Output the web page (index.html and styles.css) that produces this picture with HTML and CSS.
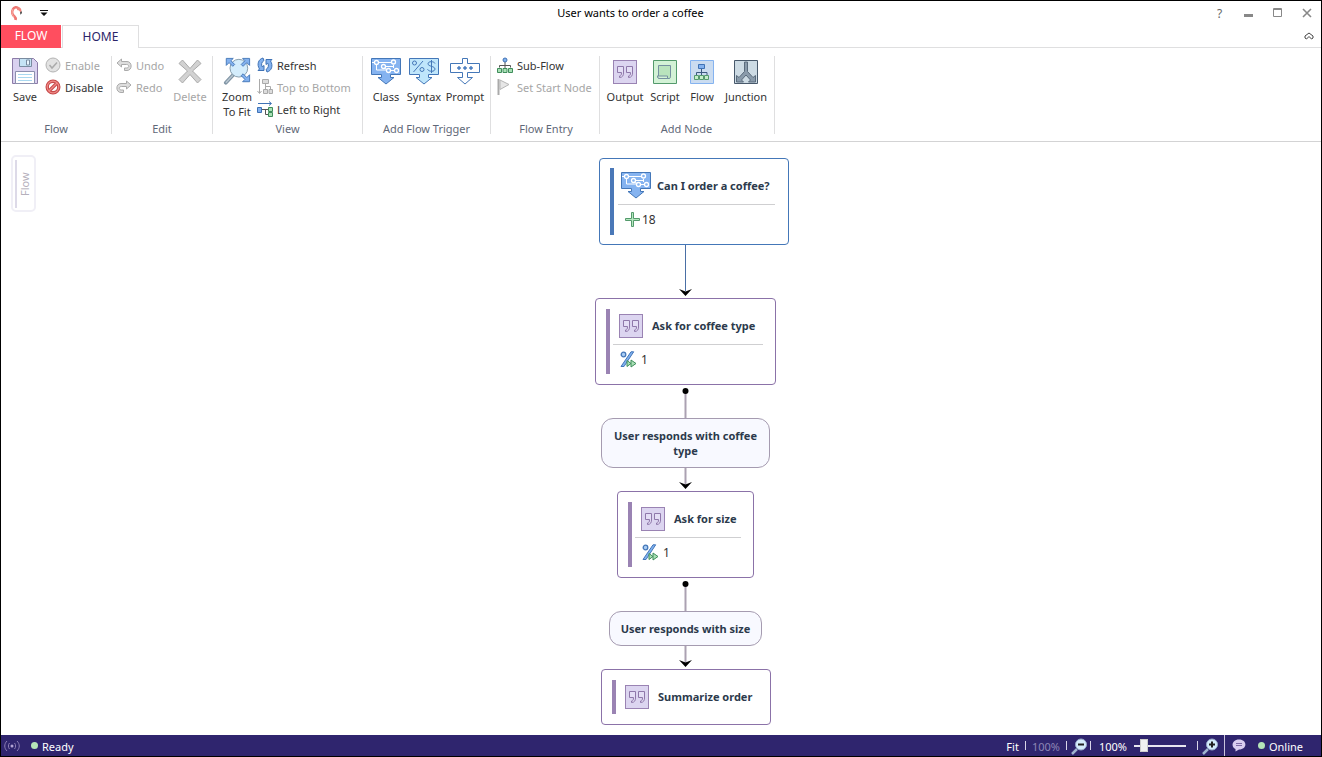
FILE: index.html
```
<!DOCTYPE html>
<html lang="en">
<head>
<meta charset="utf-8">
<title>User wants to order a coffee</title>
<link rel="stylesheet" href="styles.css">
</head>
<body>
<svg class="defs" aria-hidden="true">
  <symbol id="i-quote" viewBox="0 0 24 24">
    <rect x=".5" y=".5" width="23" height="23" fill="#dcd5f0" stroke="#9a83b3"/>
    <path d="M4.500 6.500h6v6.500c0 2.500-1 4.500-4 4.500v-1.500c1.500 0 2-1 2-3.500h-4zM13.500 6.500h6v6.500c0 2.500-1 4.500-4 4.500v-1.500c1.500 0 2-1 2-3.500h-4z" fill="#e4def5" stroke="#8f78aa"/>
  </symbol>
  <symbol id="i-class" viewBox="0 0 30 28">
    <path d="M.5 1.500h29v16H19.500v3h3.500L15 27 7 20.500h3.500v-3H.5z" fill="#85b3f0" stroke="#4477b8"/>
    <path d="M1 5.500h3M8 5.500h12M5.500 7.500v5.500H15M22.500 8v3M14.500 9.500h8.500M12.500 11l4 1.500M19.500 13.500h4" fill="none" stroke="#fff"/>
    <g fill="#85b3f0" stroke="#fff" stroke-width="1.300"><circle cx="5.500" cy="5.500" r="2"/><circle cx="22.500" cy="5" r="2"/><circle cx="12.500" cy="9.500" r="2"/><circle cx="17.500" cy="13.500" r="2"/><circle cx="25.500" cy="13.500" r="2"/></g>
  </symbol>
  <symbol id="i-percent" viewBox="0 0 17 17">
    <circle cx="3.500" cy="3.500" r="2.300" fill="#a9cdf5" stroke="#4477b8" stroke-width="1.300"/>
    <path d="M11 .8h2.700L4 15.500H1z" fill="#7fb0ee" stroke="#4477b8"/>
    <path d="M7 9.500l4 3-4 3zM11 9l5 3.500-5 3.500z" fill="#a9e0b5" stroke="#3f8d5b"/>
  </symbol>
</svg>
<div class="window">
  <header class="titlebar">
    <div class="quick">
      <svg width="14" height="16" viewBox="0 0 14 16"><path d="M8.500 3.500C7 1.500 4 2 2.800 4.500 1.500 7 2.500 10 4.500 11.500c1 .8 1.300 2 1 3.500" fill="none" stroke="#ee7772" stroke-width="2.600"/><path d="M3 4C1.500 6.500 2 10 4 12" fill="none" stroke="#fba9a0"/><path d="M7.500 2c2.500 0 4 1.500 4 4l-1 1.500-1.500-2-2-.5z" fill="#f0857d"/><path d="M11.500 6l.5 2-1.500 1.800-.5-2.300z" fill="#444"/></svg>
      <button class="plain" aria-label="Customize toolbar"><svg width="8" height="6" viewBox="0 0 8 6"><path d="M0 0h8v1H0zM.5 2.500h7L4 6z" fill="#111"/></svg></button>
    </div>
    <h1 class="title">User wants to order a coffee</h1>
    <div class="controls">
      <button class="plain help" aria-label="Help">?</button>
      <button class="plain" aria-label="Minimize"><svg width="10" height="10" viewBox="0 0 10 10"><path d="M0 6h9v3H0z" fill="#888"/></svg></button>
      <button class="plain" aria-label="Maximize"><svg width="10" height="10" viewBox="0 0 10 10"><path d="M.5 .5h8v8h-8zM.5 1.500h8" fill="none" stroke="#888"/></svg></button>
      <button class="plain" aria-label="Close"><svg width="10" height="10" viewBox="0 0 10 10"><path d="M1 1l8 8M9 1L1 9" stroke="#888" stroke-width="1.600"/></svg></button>
    </div>
  </header>
  <nav class="tabs">
    <button class="tab tab-file">FLOW</button>
    <button class="tab tab-home">HOME</button>
    <button class="plain collapse" aria-label="Collapse ribbon"><svg width="10" height="8" viewBox="0 0 10 8"><path d="M1 4l4-3 4 3v2L7.500 7 5 4.500 2.500 7 1 6z" fill="none" stroke="#444"/></svg></button>
  </nav>
  <div class="ribbon">
    <section class="group g-flow">
      <div class="tools">
        <button class="big"><svg width="26" height="28" viewBox="0 0 26 28"><path d="M.5 1.500h21l4 4v21H.5z" fill="#d9d1ef" stroke="#8c7ba8"/><path d="M7.500 1.500h12v8h-12z" fill="#c5e3f5" stroke="#7a8ba0"/><path d="M14.500 3h3v5h-3z" fill="#e8f6ff" stroke="#7a8ba0"/><path d="M3.500 14.500h19v12h-19z" fill="#fff" stroke="#8c8fae"/><path d="M6 17.500h14M6 20.500h14M6 23.500h14" stroke="#a9d8f0"/></svg><span>Save</span></button>
        <div class="stack">
          <button class="small" disabled><svg width="16" height="16" viewBox="0 0 16 16"><circle cx="8" cy="8" r="7" fill="#e2e2e2" stroke="#b3b3b3"/><path d="M4.500 8l2.500 3 5-5.500" fill="none" stroke="#aaa" stroke-width="1.500"/></svg>Enable</button>
          <button class="small"><svg width="16" height="16" viewBox="0 0 16 16"><circle cx="8" cy="8" r="5.800" fill="#fff" stroke="#c64a4a" stroke-width="3.400"/><path d="M4 12l8-8" stroke="#c64a4a" stroke-width="3.400"/><circle cx="8" cy="8" r="5.800" fill="none" stroke="#f08a87" stroke-width="1.200"/><path d="M4 12l8-8" stroke="#f08a87" stroke-width="1.200"/></svg>Disable</button>
        </div>
      </div>
      <h2 class="caption">Flow</h2>
    </section>
    <section class="group g-edit">
      <div class="tools">
        <div class="stack">
          <button class="small" disabled><svg width="16" height="14" viewBox="0 0 16 14"><path d="M5.500 1v2.500H11c5.500 0 5.500 9 0 9H8.500v-2.500h2c3 0 3-3.500 0-3.500h-5V9L1 5z" fill="#ddd" stroke="#aaa"/></svg>Undo</button>
          <button class="small" disabled><svg width="16" height="14" viewBox="0 0 16 14"><path d="M10.500 1v2.500H5c-5.500 0-5.500 9 0 9h2.500v-2.500h-2c-3 0-3-3.500 0-3.500h5V9L15 5z" fill="#ddd" stroke="#aaa"/></svg>Redo</button>
        </div>
        <button class="big" disabled><svg width="26" height="28" viewBox="0 0 26 28"><path d="M2 6.500L5.500 3 13 11.500 20.500 3 24 6.500 15.500 14 24 22.500 20.500 26 13 17.500 5.500 26 2 22.500 10.500 14z" fill="#d2d2d2" stroke="#aaa"/></svg><span>Delete</span></button>
      </div>
      <h2 class="caption">Edit</h2>
    </section>
    <section class="group g-view">
      <div class="tools">
        <button class="big"><svg width="28" height="30" viewBox="0 0 28 30"><path d="M10 19L2 27.500" stroke="#8095a5" stroke-width="4" stroke-linecap="round"/><path d="M9.500 19.500L2 27.500" stroke="#b9c7d1" stroke-width="1.500"/><circle cx="16" cy="12" r="9.500" fill="#d4edfc" stroke="#8098a8"/><g fill="#83b1ee" stroke="#4477b8"><path d="M2.500 1.500H10L7.500 4l4 4-2 2-4-4L2.500 9zM27.500 1.500H20L22.500 4l-4 4 2 2 4-4 3 3zM27.500 26.500H20l2.500-2.500-4-4 2-2 4 4 3-3z"/></g></svg><span>Zoom<br>To Fit</span></button>
        <div class="stack">
          <button class="small"><svg width="16" height="16" viewBox="0 0 16 16"><path d="M6 1C1.500 2 -.5 7.500 2.500 12L1 13.500h6v-5l-1.800 1.300C4 7.500 4.500 5 7 3.500zM10 15c4.500-1 6.500-6.500 3.500-11L15 2.500H9v5l1.800-1.300C12 8.500 11.500 11 9 12.500z" fill="#83b1ee" stroke="#3f72b5"/></svg>Refresh</button>
          <button class="small" disabled><svg width="16" height="16" viewBox="0 0 16 16"><path d="M2.500 0v14M.5 12l2 2.500 2-2.500M8.500 5v5M8.500 7.500h5V10" fill="none" stroke="#aaa"/><path d="M5.500 .5h6v4h-6zM6.500 10.500h4v4h-4zM12 10.500h3.500v4H12z" fill="#ddd" stroke="#aaa"/></svg>Top to Bottom</button>
          <button class="small"><svg width="16" height="16" viewBox="0 0 16 16"><path d="M1 2.500h13M12 .5l2.500 2-2.500 2" fill="none" stroke="#3f72b5"/><path d="M5 8.500h6M8.500 8.500v5H11" fill="none" stroke="#555"/><path d="M.5 6.500h4v5h-4z" fill="#83b1ee" stroke="#3f72b5"/><path d="M11.500 6.500h4v4h-4zM11.500 11.500h4v4h-4z" fill="#a9e0b5" stroke="#3f8d5b"/></svg>Left to Right</button>
        </div>
      </div>
      <h2 class="caption">View</h2>
    </section>
    <section class="group g-trigger">
      <div class="tools">
        <button class="big"><svg width="30" height="28"><use href="#i-class"/></svg><span>Class</span></button>
        <button class="big"><svg width="30" height="28" viewBox="0 0 30 28"><path d="M.5 1.500h29v16H19.500v3h3.500L15 27 7 20.500h3.500v-3H.5z" fill="#bfe6fb" stroke="#4477b8"/><g fill="none" stroke="#4477b8"><circle cx="5.500" cy="6" r="2"/><circle cx="13" cy="12.500" r="2"/><path d="M14 4L4.500 15M26 6.500c-1-2.500-7-2.500-7 .3s7 2.200 7 5.200-6 3-7.500.3M22.500 3v13"/></g></svg><span>Syntax</span></button>
        <button class="big wide"><svg width="30" height="28" viewBox="0 0 30 28"><path d="M12.500 1.500h5v5h12v9h-12v5h5L15 27l-7.500-6.500h5v-5H.5v-9h12z" fill="#fff" stroke="#4477b8"/><g fill="#5f93d8" stroke="#4477b8"><circle cx="9" cy="11" r="1.300"/><circle cx="15" cy="11" r="1.300"/><circle cx="21" cy="11" r="1.300"/></g></svg><span>Prompt</span></button>
      </div>
      <h2 class="caption">Add Flow Trigger</h2>
    </section>
    <section class="group g-entry">
      <div class="tools">
        <div class="stack">
          <button class="small"><svg width="16" height="16" viewBox="0 0 16 16"><path d="M8 5v3M2.500 10.500v-2h11v2M8 8v3" fill="none" stroke="#555"/><circle cx="8" cy="3" r="2" fill="#83b1ee" stroke="#3f72b5"/><path d="M.5 11.500h4v4h-4zM6 11.500h4v4H6zM11.500 11.500h4v4h-4z" fill="#a9e0b5" stroke="#3f8d5b"/></svg>Sub-Flow</button>
          <button class="small" disabled><svg width="16" height="16" viewBox="0 0 16 16"><path d="M1.500 0v16" stroke="#aaa" stroke-width="2"/><path d="M3 1l9 4.500L3 10.500z" fill="#e6e6e6" stroke="#b5b5b5"/></svg>Set Start Node</button>
        </div>
      </div>
      <h2 class="caption">Flow Entry</h2>
    </section>
    <section class="group g-node">
      <div class="tools">
        <button class="big wide"><svg class="tile" width="24" height="24"><use href="#i-quote"/></svg><span>Output</span></button>
        <button class="big script"><svg class="tile" width="24" height="24" viewBox="0 0 24 24"><path d="M.5 .5h23v23H.5z" fill="#d3f2d6" stroke="#549a6c"/><path d="M5.500 5.500h12v10.500c0 1 0 2.500-1.500 2.500H7c-2 0-2.500-1-2.500-2.500h1z" fill="#b9e3bd" stroke="#7590a0"/><path d="M4.500 16h10v2.500H7c-2 0-2.500-1-2.500-2.500z" fill="#d3f2d6" stroke="#7590a0"/></svg><span>Script</span></button>
        <button class="big"><svg class="tile" width="24" height="24" viewBox="0 0 24 24"><path d="M.5 .5h23v23H.5z" fill="#cbdcf0" stroke="#85b3f0"/><path d="M11.500 8v8M6.500 15.500v-3h10.500v3" fill="none" stroke="#3d5a80"/><path d="M8.500 4.500h6v4h-6z" fill="#83b1ee" stroke="#3f72b5"/><path d="M4.500 15.500h4v4h-4zM9.500 15.500h4v4h-4zM14.500 15.500h4v4h-4z" fill="#c5efc9" stroke="#549a6c"/></svg><span>Flow</span></button>
        <button class="big xwide"><svg class="tile" width="24" height="24" viewBox="0 0 24 24"><path d="M.5 .5h23v23H.5z" fill="#cddbe4" stroke="#48596b"/><path d="M10.500 2h3v9.500l5.500 6 2.500-2v6.500h-7l2-2-4.500-5-4.500 5 2 2H2.500v-6.500l2.500 2 5.500-6z" fill="#8a9bab" stroke="#5a6b7c"/></svg><span>Junction</span></button>
      </div>
      <h2 class="caption">Add Node</h2>
    </section>
  </div>
  <main class="canvas">
    <button class="palette"><span>Flow</span></button>
    <div class="diagram">
      <svg class="links" width="220" height="590" viewBox="0 0 220 590">
        <path d="M95.500 103v46" stroke="#4a6fa5"/>
        <path d="M95.500 249v27M95.500 326v18M95.500 442v27M95.500 504v18" stroke="#aba1b2" stroke-width="2"/>
        <circle cx="95.500" cy="249" r="3"/><circle cx="95.500" cy="442" r="3"/>
        <path d="M89 147l6.500 2.500 6.500-2.500-6.500 7zM89 340l6.500 2.500 6.500-2.500-6.500 7zM89 518l6.500 2.500 6.500-2.500-6.500 7z"/>
      </svg>
      <article class="node trigger n1">
        <div class="body">
          <div class="head"><svg width="30" height="28"><use href="#i-class"/></svg><h3>Can I order a coffee?</h3></div>
          <div class="foot"><svg width="16" height="16" viewBox="0 0 16 16"><path d="M6.500 .5h2v6h6v2h-6v6h-2v-6h-6v-2h6z" fill="#b5e8bf" stroke="#549a6c"/></svg><span>18</span></div>
        </div>
      </article>
      <article class="node n2">
        <div class="body">
          <div class="head"><svg width="24" height="24"><use href="#i-quote"/></svg><h3>Ask for coffee type</h3></div>
          <div class="foot"><svg width="17" height="17"><use href="#i-percent"/></svg><span>1</span></div>
        </div>
      </article>
      <div class="pill p1">User responds with coffee type</div>
      <article class="node n3">
        <div class="body">
          <div class="head"><svg width="24" height="24"><use href="#i-quote"/></svg><h3>Ask for size</h3></div>
          <div class="foot"><svg width="17" height="17"><use href="#i-percent"/></svg><span>1</span></div>
        </div>
      </article>
      <div class="pill p2">User responds with size</div>
      <article class="node n4">
        <div class="body">
          <div class="head"><svg width="24" height="24"><use href="#i-quote"/></svg><h3>Summarize order</h3></div>
        </div>
      </article>
    </div>
  </main>
  <footer class="status">
    <svg width="16" height="12" viewBox="0 0 16 12"><g fill="none" stroke="#8d7fb5"><path d="M3 1C0 4 0 8 3 11M5.500 3c-1.500 2-1.500 4 0 6M13 1c3 3 3 7 0 10M10.500 3c1.500 2 1.500 4 0 6"/></g><circle cx="8" cy="6" r="1.500" fill="#b3a5d5"/></svg>
    <span class="dot ready-dot"></span><span>Ready</span>
    <div class="zoom">
      <button class="plain">Fit</button><i class="sep"></i><button class="plain dim" disabled>100%</button><i class="sep"></i>
      <button class="plain" aria-label="Zoom out"><svg width="17" height="17" viewBox="0 0 17 17"><path d="M6 11l-5 5" stroke="#9fb4cf" stroke-width="2.500"/><circle cx="10" cy="6.500" r="5.500" fill="#d4edfc" stroke="#9ac"/><path d="M7 6.500h6" stroke="#222" stroke-width="2"/></svg></button><i class="sep"></i>
      <output class="level">100%</output>
      <input class="slider" type="range" min="0" max="100" value="14" aria-label="Zoom level"><i class="sep"></i>
      <button class="plain" aria-label="Zoom in"><svg width="17" height="17" viewBox="0 0 17 17"><path d="M6 11l-5 5" stroke="#9fb4cf" stroke-width="2.500"/><circle cx="10" cy="6.500" r="5.500" fill="#d4edfc" stroke="#9ac"/><path d="M7 6.500h6M10 3.500v6" stroke="#222" stroke-width="2"/></svg></button>
    </div>
    <div class="online">
      <svg width="14" height="13" viewBox="0 0 14 13"><path d="M7 .5c8.500 0 8.500 10 0 10L3.500 12.500v-2.500C-1.500 8 0 .5 7 .5z" fill="#d9cdf0"/><path d="M4 4.500h6M4 6.500h6" stroke="#7d6aa5"/></svg>
      <span class="dot"></span><span>Online</span>
    </div>
  </footer>
</div>
</body>
</html>
```
FILE: styles.css
```
* { box-sizing: border-box; }
body { margin: 0; font: 11px/15px "Noto Sans", "Open Sans", sans-serif; color: #333; background: #fff; }
h1, h2, h3 { margin: 0; font-size: inherit; font-weight: 400; }
button { font: inherit; color: inherit; background: none; border: 0; padding: 0; margin: 0; }
svg { display: block; flex: none; }
.defs { position: absolute; width: 0; height: 0; }
.window { display: flex; flex-direction: column; height: 100vh; border: 1px solid #000; }
.plain { display: flex; align-items: center; justify-content: center; }

.titlebar { display: flex; height: 24px; flex: none; }
.quick { display: flex; align-items: center; gap: 16px; width: 55px; padding-left: 9px; }
.title { flex: 1; text-align: center; line-height: 24px; color: #000; }
.controls { display: flex; }
.controls .plain { width: 29px; }
.controls .help { font-size: 12px; color: #666; }

.tabs { display: flex; height: 23px; flex: none; border-bottom: 1px solid #dfdfe0; }
.tab { height: 23px; font-size: 12px; padding-bottom: 2px; }
.tab-file { width: 60px; background: #ff4e5f; color: #fff; }
.tab-home { width: 77px; margin-left: 1px; background: #fff; border: 1px solid #dfdfe0; border-bottom: 0; color: #2b2468; }
.collapse { margin-left: auto; width: 25px; }

.ribbon { display: flex; flex: none; padding: 8px 0 7px; border-bottom: 1px solid #d3d3d4; }
.group { display: flex; flex-direction: column; height: 78px; border-right: 1px solid #dfdfe0; }
.g-flow { width: 111px; padding-left: 4px; }
.g-edit { width: 101px; padding-left: 4px; }
.g-view { width: 150px; padding-left: 4px; }
.g-trigger { width: 128px; padding-left: 4px; }
.g-entry { width: 109px; padding-left: 6px; }
.g-node { width: 175px; padding-left: 3px; }
.tools { display: flex; flex: 1; align-items: flex-start; }
.caption { flex: none; margin-right: 4px; padding-top: 1px; height: 14px; text-align: center; color: #5f6878; }
.big { display: flex; flex-direction: column; align-items: center; width: 38px; white-space: nowrap; }
.big svg { height: 28px; margin: 1px 0 4px; }
.big .tile { height: 24px; margin: 4px 0 5px; }
.g-flow .big, .g-edit .big, .g-view .big { width: 40px; }
.big.wide { width: 44px; }
.big.xwide { width: 50px; }
.big.script { width: 36px; }
.stack { display: flex; flex-direction: column; margin-top: -2px; }
.small { display: flex; align-items: center; gap: 4px; height: 22px; white-space: nowrap; }
.g-edit .stack { width: 54px; }
.small:disabled, .big:disabled { color: #a6a6a6; }

.canvas { flex: 1; min-height: 0; position: relative; }
.palette { display: flex; align-items: center; margin: 13px 0 0 10px; width: 25px; height: 57px; padding: 3px 0 3px 2px; border: 2px solid #f0eff6; border-radius: 5px; color: #b5b0bc; }
.palette span { writing-mode: vertical-rl; transform: rotate(180deg); border-right: 2px solid #dddae8; height: 48px; width: 18px; line-height: 15px; text-align: center; }
.diagram { position: absolute; top: 0; left: 50%; margin-left: -71px; }
.links { position: absolute; }
.node { position: absolute; display: flex; border: 1px solid #8b72a8; border-radius: 4px; padding: 10px 12px 10px 10px; background: #fff; }
.node::before { content: ""; width: 4px; background: #9a83b3; margin-right: 3px; }
.trigger { border-color: #4477b8; padding: 9px 13px 9px 10px; }
.trigger::before { background: #4a78b8; margin-right: 4px; }
.body { flex: 1; }
.head { display: flex; align-items: center; gap: 9px; height: 34px; padding: 0 0 2px 6px; white-space: nowrap; }
.head:not(:last-child) { height: 36px; border-bottom: 1px solid #cfcfd1; }
.head:last-child svg { margin-top: 2px; }
.trigger .head:not(:last-child) { gap: 6px; padding-left: 3px; height: 37px; }
.head h3 { font-weight: 700; color: #2c3a4c; }
.foot { display: flex; align-items: center; gap: 4px; height: 29px; padding-left: 7px; }
.trigger .foot { gap: 1px; }
.foot span { font-size: 12px; }
.n1 { left: 9px; top: 16px; width: 190px; height: 87px; }
.n2 { left: 5px; top: 156px; width: 181px; height: 87px; }
.n3 { left: 27px; top: 349px; width: 137px; height: 87px; }
.n4 { left: 11px; top: 527px; width: 170px; height: 56px; }
.pill { position: absolute; display: flex; align-items: center; text-align: center; padding: 0 8px; border: 1px solid #a59bb0; border-radius: 12px; background: #f8f9ff; font-weight: 700; color: #2c3a4c; justify-content: center; }
.p1 { left: 11px; top: 276px; width: 169px; height: 50px; }
.p2 { left: 19px; top: 469px; width: 153px; height: 35px; }

.status { display: flex; align-items: center; flex: none; height: 21px; padding: 0 18px 0 3px; background: #2f256e; color: #fff; line-height: 21px; }
.status > span, .zoom .plain, .level, .online span { padding-top: 1px; }
.dot { width: 7px; height: 7px; border-radius: 50%; background: #b5e5b8; margin-right: 4px; }
.ready-dot { margin-left: 11px; }
.zoom { display: flex; align-items: center; margin-left: auto; gap: 6px; }
.sep { width: 1px; height: 9px; background: #d8d4e8; }
.dim { color: #8d85b5; }
.zoom svg { margin: 0 -4px 0 -2px; }
.level { margin-left: 2px; width: 28px; }
.slider { appearance: none; width: 52px; height: 14px; margin: 0 5px 0 1px; background: linear-gradient(#e8e6f0, #e8e6f0) center / 100% 2px no-repeat; }
.slider::-webkit-slider-thumb { appearance: none; width: 8px; height: 13px; background: #f0f0f0; border: 1px solid #ccc; }
.online { display: flex; align-items: center; height: 21px; margin-left: 9px; padding-left: 7px; border-left: 1px solid #c9c4dc; }
.online .dot { margin-left: 12px; }
```
